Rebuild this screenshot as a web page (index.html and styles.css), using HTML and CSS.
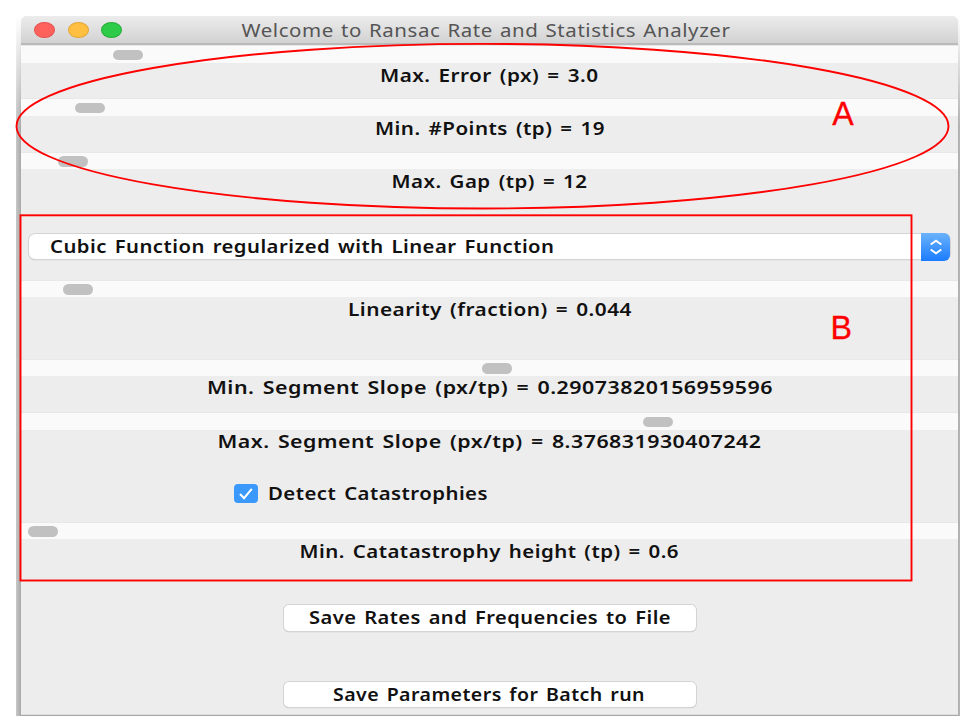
FILE: index.html
```html
<!DOCTYPE html>
<html lang="en">
<head>
<meta charset="utf-8">
<title>Welcome to Ransac Rate and Statistics Analyzer</title>
<link rel="stylesheet" href="styles.css">
</head>
<body>
<div class="backdrop">
<main class="window">
  <header class="titlebar">
    <span class="light close"></span><span class="light minimize"></span><span class="light zoom"></span>
    <svg class="title" width="491" height="28"><text x="0.5" y="21" textLength="489" lengthAdjust="spacingAndGlyphs">Welcome to Ransac Rate and Statistics Analyzer</text></svg>
  </header>
  <section class="row error">
    <div class="track"><span class="thumb"></span></div>
    <svg class="caption" width="219" height="24"><text x="0" y="18.5" textLength="218.5" lengthAdjust="spacingAndGlyphs">Max. Error (px) = 3.0</text></svg>
  </section>
  <section class="row points">
    <div class="track"><span class="thumb"></span></div>
    <svg class="caption" width="230" height="24"><text x="0" y="18.5" textLength="230" lengthAdjust="spacingAndGlyphs">Min. #Points (tp) = 19</text></svg>
  </section>
  <section class="row gap">
    <div class="track"><span class="thumb"></span></div>
    <svg class="caption" width="197" height="24"><text x="0.5" y="18.5" textLength="196" lengthAdjust="spacingAndGlyphs">Max. Gap (tp) = 12</text></svg>
  </section>
  <section class="chooser">
    <div class="select">
      <svg class="caption" width="506" height="26"><text x="0" y="19" textLength="504.5" lengthAdjust="spacingAndGlyphs">Cubic Function regularized with Linear Function</text></svg>
      <span class="stepper"><svg width="14" height="18" viewBox="0 0 14 18"><path d="M1.7 6.500 7 2.700l5.300 3.800M1.700 11.500 7 15.300l5.300-3.800"/></svg></span>
    </div>
  </section>
  <section class="row linearity">
    <div class="track"><span class="thumb"></span></div>
    <svg class="caption" width="284" height="24"><text x="0" y="18.5" textLength="284" lengthAdjust="spacingAndGlyphs">Linearity (fraction) = 0.044</text></svg>
  </section>
  <section class="row minslope">
    <div class="track"><span class="thumb"></span></div>
    <svg class="caption" width="566" height="24"><text x="0" y="18" textLength="566" lengthAdjust="spacingAndGlyphs">Min. Segment Slope (px/tp) = 0.29073820156959596</text></svg>
  </section>
  <section class="row maxslope">
    <div class="track"><span class="thumb"></span></div>
    <svg class="caption" width="544" height="24"><text x="-0.5" y="18" textLength="544" lengthAdjust="spacingAndGlyphs">Max. Segment Slope (px/tp) = 8.376831930407242</text></svg>
  </section>
  <section class="check">
    <span class="box"><svg width="24" height="19" viewBox="0 0 24 19"><path d="m6 10 4 4.200L17.800 4.800"/></svg></span>
    <svg class="caption" width="222" height="24"><text x="0" y="18" textLength="220" lengthAdjust="spacingAndGlyphs">Detect Catastrophies</text></svg>
  </section>
  <section class="row height">
    <div class="track"><span class="thumb"></span></div>
    <svg class="caption" width="380" height="24"><text x="-0.5" y="18.5" textLength="379.5" lengthAdjust="spacingAndGlyphs">Min. Catatastrophy height (tp) = 0.6</text></svg>
  </section>
  <section class="actions">
    <div class="button"><svg class="caption" width="362" height="25"><text x="0" y="19" textLength="362" lengthAdjust="spacingAndGlyphs">Save Rates and Frequencies to File</text></svg></div>
    <div class="button"><svg class="caption" width="314" height="25"><text x="0" y="19" textLength="312" lengthAdjust="spacingAndGlyphs">Save Parameters for Batch run</text></svg></div>
  </section>
</main>
</div>
<svg class="marks" width="960" height="720" viewBox="0 0 960 720">
  <ellipse cx="482.500" cy="126.200" rx="466" ry="82.300"/>
  <rect x="20.500" y="215.300" width="891" height="365.200"/>
  <text x="832.300" y="124.500" textLength="21.500" lengthAdjust="spacingAndGlyphs">A</text>
  <text x="830.500" y="339.300" textLength="21.500" lengthAdjust="spacingAndGlyphs">B</text>
</svg>
</body>
</html>
```
FILE: styles.css
```css
* { box-sizing: border-box; }
body {
  margin: 0;
  width: 960px;
  height: 720px;
  overflow: hidden;
  background: #fff;
}
.backdrop {
  margin: 16px 0 0 16px;
  width: 944px;
  height: 700px;
  padding-left: 5px;
  background: linear-gradient(90deg, #c8c8c8, #a8a8a8 5px, #a8a8a8 940px, #b5b5b5);
  position: relative;
}
.backdrop::before {
  content: "";
  position: absolute;
  inset: 0;
  background: linear-gradient(#fff, rgba(255, 255, 255, 0) 110px);
}
.window {
  position: relative;
  width: 937px;
  height: 699px;
  display: flex;
  flex-direction: column;
  background: #ededed;
  border-radius: 6px 6px 0 0;
  overflow: hidden;
  border-bottom: 1px solid #ddd;
}
.titlebar {
  flex: none;
  height: 29px;
  display: flex;
  align-items: center;
  padding-left: 13px;
  background: linear-gradient(#ececec, #d2d2d2);
  border-bottom: 2px solid #bababa;
}
.light {
  width: 21px;
  height: 16px;
  margin: 1px 12.500px 0 0;
  border-radius: 50%;
  border: 1px solid;
}
.close { background: #ff625c; border-color: #e5514c; }
.minimize { background: #ffbf40; border-color: #e3a63a; }
.zoom { background: #2dcb47; border-color: #25ad38; }
.title { margin-left: 106px; }
.title text {
  font: 400 17.500px "Noto Sans", "Open Sans", sans-serif;
  letter-spacing: 0.500px;
  word-spacing: 1px;
  fill: #555;
}
.caption { display: block; flex: none; }
.caption text {
  font: 600 17.300px "Noto Sans", "Open Sans", sans-serif;
  letter-spacing: 0.400px;
  word-spacing: 1.800px;
  fill: #111;
}
.row {
  flex: none;
  height: 53.300px;
  display: flex;
  flex-direction: column;
  align-items: center;
}
.gap { height: 64px; }
.linearity { height: 79.200px; }
.maxslope { height: 64px; }
.height { height: 69.700px; }
.track {
  flex: none;
  width: 100%;
  height: 17.500px;
  padding: 3.500px 7px 0;
  background: #fafafa;
  border-top: 1px solid #e8e8e8;
}
.thumb {
  display: block;
  width: 30px;
  height: 10.500px;
  border-radius: 6px;
  background: #c1c1c1;
}
.error .thumb { margin-left: 85px; }
.points .thumb { margin-left: 47px; }
.gap .thumb { margin-left: 30px; }
.linearity .thumb { margin-left: 35px; }
.minslope .thumb { margin-left: 454px; }
.maxslope .thumb { margin-left: 615px; }
.chooser {
  flex: none;
  height: 64px;
  padding: 18.500px 8px 0;
}
.select {
  height: 25px;
  display: flex;
  justify-content: space-between;
  padding-left: 21px;
  background: #fff;
  border-radius: 6px;
  box-shadow: 0 0 0 1px #d4d4d4, 0 1px 1px #aaa;
}
.stepper {
  width: 29px;
  height: 28px;
  margin-top: -1px;
  display: flex;
  align-items: center;
  justify-content: center;
  border-radius: 0 6px 6px 0;
  background: linear-gradient(#6bb2fb, #1b7cff);
}
.stepper path { fill: none; stroke: #fff; stroke-width: 2; }
.check {
  flex: none;
  height: 45.500px;
  display: flex;
  align-items: flex-start;
  padding: 6px 0 0 213px;
  gap: 10px;
}
.box {
  width: 24px;
  height: 19px;
  margin-top: 2px;
  border-radius: 4px;
  background: #3b99fc;
}
.box svg { display: block; }
.box path { fill: none; stroke: #fff; stroke-width: 2; }
.actions {
  display: flex;
  flex-direction: column;
  align-items: center;
  gap: 51px;
  padding-top: 14px;
}
.button {
  flex: none;
  width: 412px;
  height: 25.500px;
  display: flex;
  justify-content: center;
  background: #fff;
  border-radius: 5px;
  box-shadow: 0 0 0 1px #d4d4d4, 0 1px 1px #aaa;
}
.marks {
  position: absolute;
  top: 0;
  left: 0;
  pointer-events: none;
}
.marks ellipse,
.marks rect { fill: none; stroke: #f00; stroke-width: 1.900; }
.marks text { font: 32.500px "Liberation Sans", sans-serif; fill: #f00; stroke: #f00; stroke-width: 0.300; }
```
